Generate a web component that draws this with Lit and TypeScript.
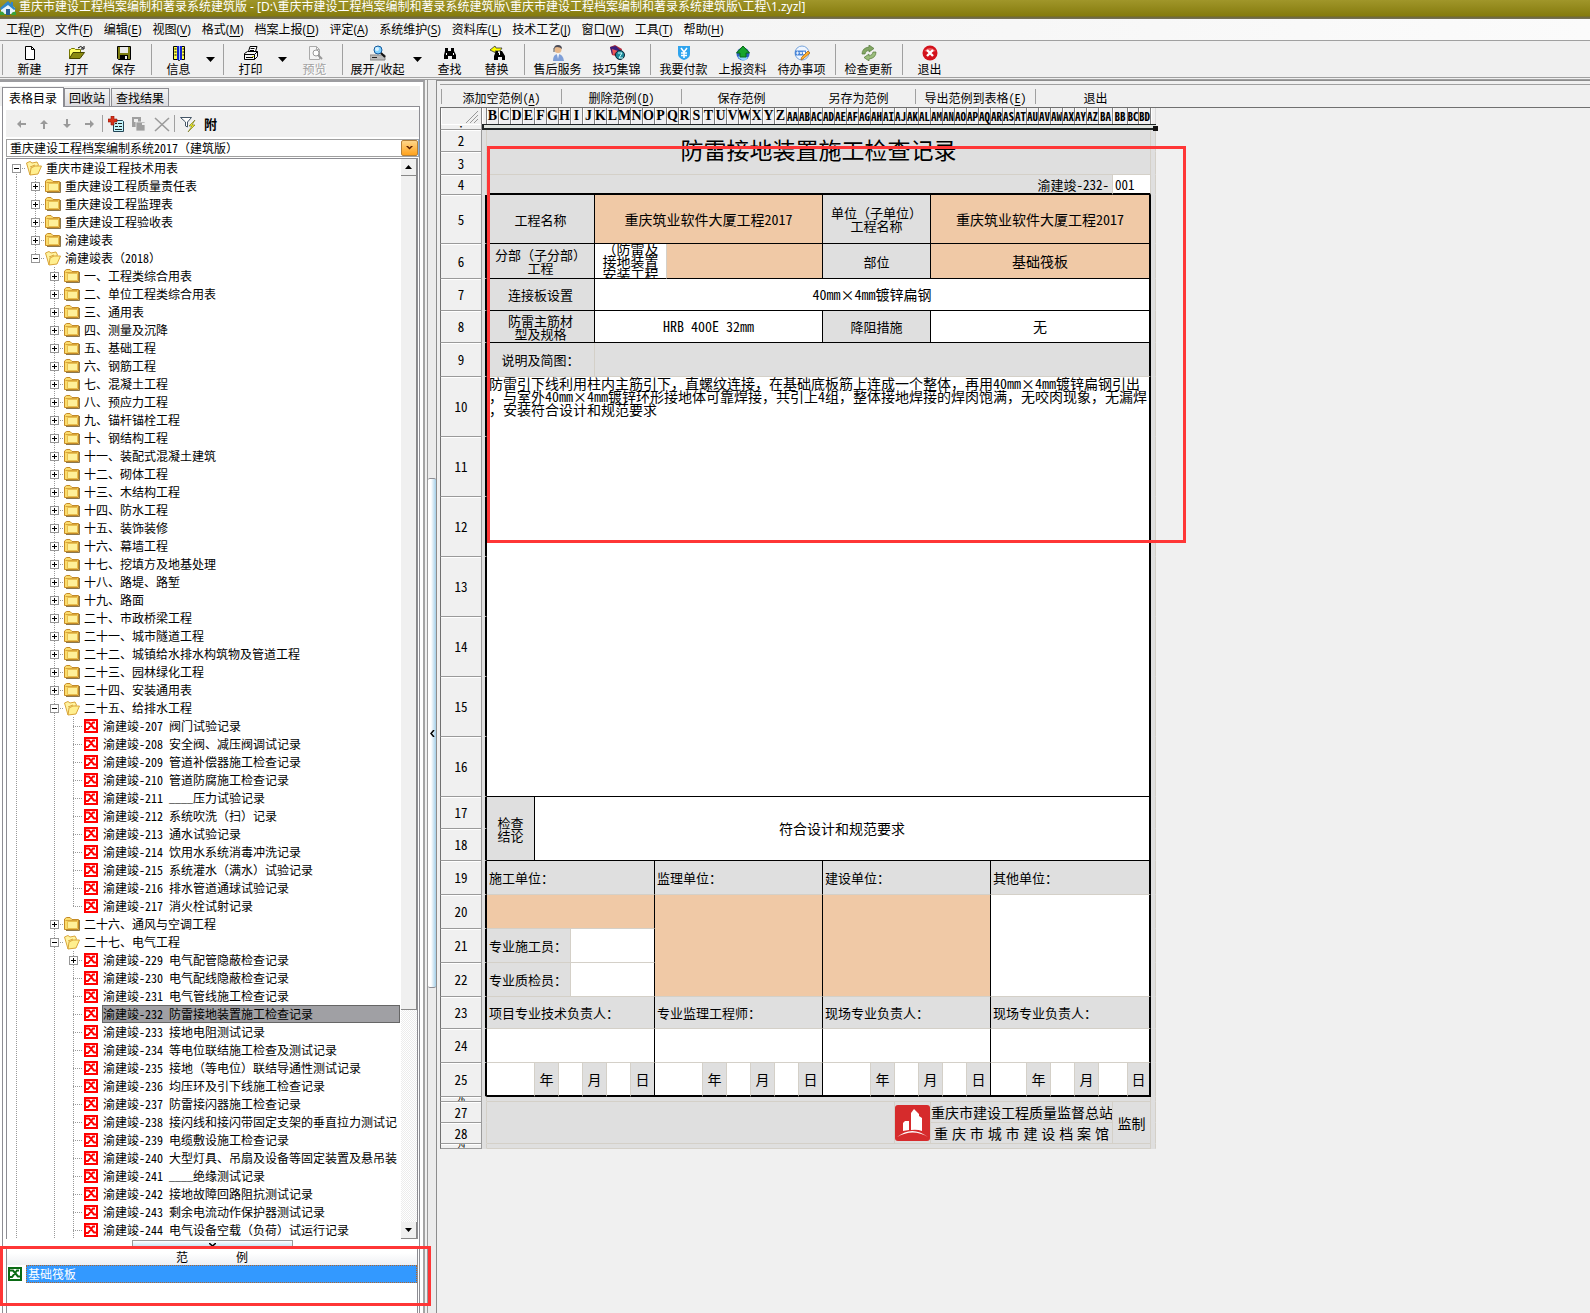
import { LitElement, html, css, svg, nothing } from "lit";
import { customElement, property, state } from "lit/decorators.js";
import { classMap } from "lit/directives/class-map.js";

const frame = (body: unknown, w = 16, h = 16) =>
  html`<svg width=${w} height=${h} viewBox="0 0 ${w} ${h}" aria-hidden="true">${body}</svg>`;

const icons: Record<string, unknown> = {
  app: svg`<path d="M1 8 8 2l7 6v6H1z" fill="#e8f3fb"/><path d="M0 8 8 1l3 3V2h2v4l3 3-2 1-6-5-7 5z" fill="#2f86c9"/><path d="M6 9h4v6H6z" fill="#2b5f95"/><path d="M0 12q3-2 5 3H0zM11 15q1-4 5-3v3z" fill="#3aa13a"/>`,
  new: svg`<path d="M3.500 1.500h6l3 3v10h-9z" fill="#fff" stroke="#000"/><path d="M9.500 1.500v3h3" fill="none" stroke="#000"/>`,
  open: svg`<path d="M.5 13.500v-9h1l1-1h3l1 1h5v3" fill="#ff6" stroke="#770"/><path d="M.5 13.500 4 7.500h11.500L11 13.500z" fill="#8a8a10" stroke="#440"/><path d="M9 3q3-3 5 0M12 4h3V1" fill="none" stroke="#000"/>`,
  save: svg`<path d="M1.500 1.500h13v13h-12l-1-1z" fill="#7d7d12" stroke="#000"/><path d="M4 2h8v6H4z" fill="#e9e9e9"/><path d="M4 10h8v4.500H4z" fill="#000"/><path d="M9 11h2v3H9z" fill="#eee"/>`,
  info: svg`<path d="M2.500 1.500h4l1.500 1 1.500-1h4v13H9.500l-1.500 1-1.500-1h-4z" fill="#ffff4a" stroke="#000"/><path d="M6 1h5v14H6z" fill="#12c"/><path d="M8 1h1v14H8z" fill="#9cf"/><path d="M3.500 4h2M3.500 7h2M3.500 10h2M11.500 4h2M11.500 7h2M11.500 10h2" stroke="#000"/>`,
  print: svg`<path d="M5.500 6.500 7 1.500h7l-1.500 5" fill="#fff" stroke="#000"/><path d="M7.500 3.500h4M7 5.500h4" stroke="#000"/><path d="M1.500 8.500l3-2h10v5l-3 3h-10z" fill="#f5f5f5" stroke="#000"/><path d="M1.500 9.500h10l3-3M11.500 9.500v5M3 12.500h7" fill="none" stroke="#000"/><path d="M9 11h2v1H9z" fill="#dd0"/>`,
  preview: svg`<path d="M2.500 1.500h7l3 3v10h-10z" fill="#f5f5f5" stroke="#aaa"/><path d="M9.500 1.500v3h3" fill="none" stroke="#aaa"/><circle cx="9" cy="8" r="3" fill="#fff" stroke="#999"/><path d="M11 10l4 4" stroke="#999" stroke-width="2"/>`,
  expand: svg`<path d="M0 10h15v5H0z" fill="#bcbcbc" stroke="#888"/><path d="M2 12.500h5" stroke="#222"/><circle cx="8" cy="5" r="4" fill="#7fd0ff" stroke="#155a9c"/><circle cx="7" cy="4" r="2" fill="#d9f2ff"/><path d="M11 8l4 4" stroke="#111" stroke-width="2"/>`,
  find: svg`<path d="M3 3h3v3h3V3h3v3l2 4v4h-4v-3H6v3H2v-4l1-4z" fill="#000"/><path d="M4 8h1v2H4zM11 8h1v2h-1z" fill="#fff"/>`,
  replace: svg`<path d="M1 5l5-4 1 2h6l-2 3H6l1 2z" fill="#ff0" stroke="#333" stroke-width=".8"/><path d="M7 6h2v2h2V6h2l3 5v4h-3v-3H9v3H5v-4z" fill="#000"/><path d="M10 8h1v2h-1z" fill="#fff"/>`,
  service: svg`<circle cx="8" cy="4.500" r="3.500" fill="#e8b98c"/><path d="M4 4q0-4 4-4t4 4q-2-2-5-2-2 0-3 2z" fill="#4b4b55"/><path d="M3 16q0-7 5-7t6 7z" fill="#7f9fd8"/><path d="M7 9h2l-1 5z" fill="#fff"/><path d="M4 3v4" stroke="#555"/>`,
  skill: svg`<path d="M1 2l5-2 7 4-2 8-8-2z" fill="#b02a3a"/><path d="M1 2l6-1 5 5-9 3z" fill="#39207c"/><path d="M3 4l6 2-5 4z" fill="#e55"/><circle cx="11" cy="10" r="4.500" fill="#1e8a9a" stroke="#123"/><path d="M9 8h4l-3 5h4" fill="none" stroke="#cff"/>`,
  pay: svg`<path d="M2 1h12v8q0 4-6 6-6-2-6-6z" fill="#2fa4ee"/><path d="M5 3l3 4 3-4M8 7v6M5 8h6M5 10.500h6" fill="none" stroke="#fff" stroke-width="1.500"/>`,
  upload: svg`<circle cx="8" cy="9" r="6.500" fill="#2d5fc4"/><path d="M3 12q2-3 5-1 3 2 5 1-2 4-5 3.500Q5 15 3 12z" fill="#8fd6ff"/><path d="M8 1l6.500 7H11v4H5V8H1.500z" fill="#18a52c" stroke="#086818"/>`,
  todo: svg`<circle cx="8" cy="8" r="7" fill="#eef5ff" stroke="#79a5dc"/><path d="M1 5.500h11v5H1z" fill="#4a86d8"/><path d="M3 7v2h1V7zM6 7l1 2 1-2M9.500 7v2h1V7z" fill="none" stroke="#fff"/><path d="M9 14l-2 1 .5-2.500L14 6l2 2z" fill="#ffb02e" stroke="#a35f10" stroke-width=".7"/>`,
  update: svg`<path d="M1 9q0-6 7-7V0l5 3.500L8 7V5Q4 6 4 9z" fill="#83a764" stroke="#55783a" stroke-width=".7"/><path d="M15 7q0 6-7 7v2l-5-3.500L8 9v2q4-1 4-4z" fill="#9bbd7c" stroke="#55783a" stroke-width=".7"/>`,
  exit: svg`<circle cx="8" cy="8" r="7.500" fill="#d3121c"/><path d="M2 6q6-6 12 0-6 2-12 0z" fill="#ef5a5f"/><path d="M5 5l6 6M11 5l-6 6" stroke="#fff" stroke-width="2.400"/>`,
  left: svg`<path d="M4 8l4-4v3h5v2H8v3z" fill="#9a9a9a"/>`,
  up: svg`<path d="M8 4l4 4H9v5H7V8H4z" fill="#9a9a9a"/>`,
  down: svg`<path d="M8 12l4-4H9V3H7v5H4z" fill="#9a9a9a"/>`,
  right: svg`<path d="M12 8L8 4v3H3v2h5v3z" fill="#9a9a9a"/>`,
  addForm: svg`<path d="M5.500 4.500h9l1 1v10h-10z" fill="#c4f4fa" stroke="#245"/><path d="M7 7.500h2M10 7.500h4M7 10.500h3M11 10.500h3M7 13.500h7" stroke="#222"/><path d="M3 0h3v3h3v3H6v3H3V6H0V3h3z" fill="#d8321a" stroke="#8d1408" stroke-width=".6"/>`,
  copies: svg`<path d="M1 1h9v10H1z" fill="#9f9f9f"/><path d="M3 3h4v3H3z" fill="#eee"/><path d="M5 6h9v9H5z" fill="#9f9f9f" stroke="#eee" stroke-width=".8"/><path d="M11 7h3v2h-3z" fill="#eee"/>`,
  remove: svg`<path d="M1 2l14 13M15 2L1 15" stroke="#9b9b9b" stroke-width="1.600"/>`,
  filter: svg`<path d="M.5 1.500h11L7.500 6v5l-2-1V6z" fill="#fff" stroke="#456"/><path d="M15 4l-6 6h3l-4 6 7-7h-3z" fill="#ff2" stroke="#772" stroke-width=".7"/>`,
  folder: svg`<path d="M.5 13.500V3L2.500 1.500h3.500L8 3.500h6.500v10z" fill="#fbdc6c" stroke="#c48a26"/><path d="M1.500 4.500h12" stroke="#d9a53a"/><path d="M3.500 5.500h10v7h-10z" fill="#fff09a" stroke="#e8c050"/><path d="M15.500 4v10.500H2" fill="none" stroke="#6e5520" opacity=".8"/>`,
  folderOpen: svg`<path d="M.5 3L4 1.500l2 1.500 5-1 1.500 3L4 15z" fill="#fff3a0" stroke="#d9a53a"/><path d="M4 15L5 8l4-2 6.500 0L12 14z" fill="#ffef8f" stroke="#d9a53a"/><path d="M4 7l5-2" stroke="#d9a53a"/>`,
  sheetRed: svg`<path d="M1 1h14v14H1z" fill="#f00"/><path d="M3 3h10v10H3z" fill="#fff"/><path d="M3 4.500h3l5 6h2M12 4.500h-2l-5 6.500H3" stroke="#f00" stroke-width="2" fill="none"/>`,
  sheetGreen: svg`<path d="M0 1h14v14H0z" fill="#0a6b14"/><path d="M2 3h10v10H2z" fill="#fff"/><path d="M2 4.500h3l5 6h2M11 4.500H9l-5 6.500H2" stroke="#0a6b14" stroke-width="2" fill="none"/>`,
};

const menus: [string, string][] = [
  ["工程", "P"], ["文件", "F"], ["编辑", "E"], ["视图", "V"], ["格式", "M"], ["档案上报", "D"], ["评定", "A"],
  ["系统维护", "S"], ["资料库", "L"], ["技术工艺", "J"], ["窗口", "W"], ["工具", "T"], ["帮助", "H"],
];

type Tool = { label?: string; icon?: string; drop?: boolean; off?: boolean; sep?: boolean };
const tools: Tool[] = [
  { label: "新建", icon: "new" }, { label: "打开", icon: "open" }, { label: "保存", icon: "save" }, { sep: true },
  { label: "信息", icon: "info", drop: true }, { sep: true },
  { label: "打印", icon: "print", drop: true }, { label: "预览", icon: "preview", off: true }, { sep: true },
  { label: "展开/收起", icon: "expand", drop: true }, { label: "查找", icon: "find" }, { label: "替换", icon: "replace" }, { sep: true },
  { label: "售后服务", icon: "service" }, { label: "技巧集锦", icon: "skill" }, { sep: true },
  { label: "我要付款", icon: "pay" }, { label: "上报资料", icon: "upload" }, { label: "待办事项", icon: "todo" }, { sep: true },
  { label: "检查更新", icon: "update" }, { sep: true }, { label: "退出", icon: "exit" },
];

type Node = { t: string; kids?: Node[]; open?: boolean; more?: boolean; leaf?: boolean };
const folder = (t: string): Node => ({ t, kids: [] });
const forms = (first: number, names: string[]): Node[] =>
  names.map((n, i) => ({ t: `渝建竣-${first + i} ${n}`, leaf: true }));

const plumbing = forms(207, [
  "阀门试验记录", "安全阀、减压阀调试记录", "管道补偿器施工检查记录", "管道防腐施工检查记录", "____压力试验记录",
  "系统吹洗（扫）记录", "通水试验记录", "饮用水系统消毒冲洗记录", "系统灌水（满水）试验记录", "排水管道通球试验记录", "消火栓试射记录",
]);
const electric = forms(229, [
  "电气配管隐蔽检查记录", "电气配线隐蔽检查记录", "电气管线施工检查记录", "防雷接地装置施工检查记录", "接地电阻测试记录",
  "等电位联结施工检查及测试记录", "接地（等电位）联结导通性测试记录", "均压环及引下线施工检查记录", "防雷接闪器施工检查记录",
  "接闪线和接闪带固定支架的垂直拉力测试记", "电缆敷设施工检查记录", "大型灯具、吊扇及设备等固定装置及悬吊装", "____绝缘测试记录",
  "接地故障回路阻抗测试记录", "剩余电流动作保护器测试记录", "电气设备空载（负荷）试运行记录",
]);
electric[0].kids = [];
const chapters = [
  "一、工程类综合用表", "二、单位工程类综合用表", "三、通用表", "四、测量及沉降", "五、基础工程", "六、钢筋工程", "七、混凝土工程",
  "八、预应力工程", "九、锚杆锚栓工程", "十、钢结构工程", "十一、装配式混凝土建筑", "十二、砌体工程", "十三、木结构工程", "十四、防水工程",
  "十五、装饰装修", "十六、幕墙工程", "十七、挖填方及地基处理", "十八、路堤、路堑", "十九、路面", "二十、市政桥梁工程", "二十一、城市隧道工程",
  "二十二、城镇给水排水构筑物及管道工程", "二十三、园林绿化工程", "二十四、安装通用表",
].map(folder);
const root: Node = {
  t: "重庆市建设工程技术用表", open: true, more: true,
  kids: [
    folder("重庆建设工程质量责任表"), folder("重庆建设工程监理表"), folder("重庆建设工程验收表"), folder("渝建竣表"),
    {
      t: "渝建竣表（2018）", open: true,
      kids: [
        ...chapters,
        { t: "二十五、给排水工程", open: true, kids: plumbing },
        folder("二十六、通风与空调工程"),
        { t: "二十七、电气工程", open: true, more: true, kids: electric },
      ],
    },
  ],
};
electric[electric.length - 1].more = true;

const shared = css`
  :host { box-sizing: border-box; }
  * { box-sizing: border-box; }
  button { appearance: none; border: 0; padding: 0; margin: 0; background: none; color: inherit; font: inherit; }
  svg { display: block; flex: none; }
`;

@customElement("form-tree")
export class FormTree extends LitElement {
  @state() private picked = "渝建竣-232 防雷接地装置施工检查记录";
  @state() private flips = 0;

  static styles = [shared, css`
    :host { display: block; min-width: 0; overflow: hidden; }
    .row { display: flex; height: 18px; align-items: stretch; }
    .guide { flex: none; width: 19px; display: grid; place-items: center; background-repeat: no-repeat; }
    .guide.full, .guide.top, .guide.bottom { background-image: repeating-linear-gradient(#999 0 1px, transparent 1px 2px); background-size: 1px 100%; background-position: 9px 0; }
    .guide.top { background-size: 1px 10px; }
    .guide.bottom { background-size: 1px 9px; background-position: 9px 9px; }
    .arm { width: 100%; height: 1px; padding-left: 9px; background: repeating-linear-gradient(90deg, #999 0 1px, transparent 1px 2px) content-box; }
    .stack { grid-area: 1 / 1; }
    .toggle { grid-area: 1 / 1; width: 9px; height: 9px; border: 1px solid #969696; background: #fff; display: grid; place-items: center; }
    .toggle svg { grid-area: 1 / 1; }
    .icon { flex: none; width: 19px; display: flex; align-items: center; }
    .label { flex: 1; min-width: 0; text-align: left; border: 1px solid transparent; line-height: 16px; white-space: pre; overflow: hidden; }
    .label.on { background: #a0a0a4; border-color: #666; }
    .blank { font: 10px/12px "Liberation Mono", monospace; }
  `];

  private toggle(n: Node) {
    n.open = !n.open;
    this.flips++;
  }

  private text(t: string) {
    const [head, tail] = t.split("____");
    return tail === undefined ? t : html`${head}<span class="blank">____</span>${tail}`;
  }

  private rows(n: Node, rails: boolean[], last: boolean): unknown {
    const hasKids = !!n.kids;
    const kind = rails.length === 0 ? "bottom" : last ? "top" : "full";
    const icon = n.leaf ? icons.sheetRed : n.open ? icons.folderOpen : icons.folder;
    return html`
      <div class="row" role="treeitem">
        ${rails.map((r) => html`<span class="guide ${r ? "full" : ""}"></span>`)}
        <span class="guide ${kind}">
          <span class="arm stack"></span>
          ${hasKids ? html`<button class="toggle" aria-label="展开或收起 ${n.t}" @click=${() => this.toggle(n)}>
            ${frame(svg`<path d=${n.open ? "M1 3.500h5" : "M1 3.500h5M3.500 1v5"} stroke="#000"/>`, 7, 7)}
          </button>` : nothing}
        </span>
        <span class="icon">${frame(icon)}</span>
        <button class=${classMap({ label: true, on: n.t === this.picked })} @click=${() => (this.picked = n.t)}>${this.text(n.t)}</button>
      </div>
      ${n.open ? n.kids!.map((k, i, all) => this.rows(k, [...rails, !last], i === all.length - 1 && !k.more)) : nothing}`;
  }

  render() {
    return html`<div role="tree" data-flips=${this.flips}>${this.rows(root, [], false)}</div>`;
  }
}

const rowHeights = [6, 22, 23, 20, 49, 35, 32, 32, 34, 60, 60, 60, 60, 60, 60, 60, 32, 32, 34, 34, 34, 34, 32, 34, 34, 5, 21, 21, 5];

type Cell = { s: number; c?: string; t?: unknown; r?: number };
const c = (s: number, cls = "", t: unknown = nothing, r = 1): Cell => ({ s, c: cls, t, r });
const lines = (...t: string[]) => t.map((x) => html`<div>${x}</div>`);
const date = (lead: number, gap: number, cls: string): Cell[] => [
  c(lead, "white"), c(2, "kai", "年"), c(2, "white"), c(2, "kai", "月"), c(gap, "white"), c(2, `kai ${cls}`, "日"),
];

const logo = frame(svg`<rect width="35" height="36" rx="3" fill="#d62b2c"/><path d="M16 25V8l3-4 5 5v2l3 2v13q-5-2-11-1z" fill="#fff"/><path d="M8 26V18l2-2h4v9z" fill="#fff"/><path d="M2 32q15-12 31 0-15-9-31 0z" fill="#fff"/>`, 35, 36);

const sheet: Cell[][] = [
  [],
  [c(55, "title", "防雷接地装置施工检查记录", 2)],
  [],
  [c(52, "right thick", "渝建竣-232-"), c(3, "white code thick", "001")],
  [c(9, "k", "工程名称"), c(19, "fill k kai", "重庆筑业软件大厦工程2017"), c(9, "k", lines("单位（子单位）", "工程名称")), c(18, "fill k kai edge", "重庆筑业软件大厦工程2017")],
  [c(9, "k", lines("分部（子分部）", "工程")), c(6, "white kb kai", html`<div class="clip">${lines("（防雷及", "接地装置", "安装工程")}</div>`), c(13, "fill k"), c(9, "k", "部位"), c(18, "fill k kai edge", "基础筏板")],
  [c(9, "k", "连接板设置"), c(46, "white k kai edge", "40mm×4mm镀锌扁钢")],
  [c(9, "k", lines("防雷主筋材", "型及规格")), c(19, "white k kai", "HRB 400E 32mm"), c(9, "k", "降阻措施"), c(18, "white k kai edge", "无")],
  [c(9, "", "说明及简图："), c(46, "edge")],
  [c(55, "white k kai note edge", lines(
    "防雷引下线利用柱内主筋引下，直螺纹连接，在基础底板筋上连成一个整体，再用40mm×4mm镀锌扁钢引出",
    "，与室外40mm×4mm镀锌环形接地体可靠焊接，共引上4组，整体接地焊接的焊肉饱满，无咬肉现象，无漏焊",
    "，安装符合设计和规范要求"), 7)],
  [], [], [], [], [], [],
  [c(4, "k", lines("检查", "结论"), 2), c(51, "white k kai edge", "符合设计和规范要求", 2)],
  [],
  [c(14, "left kr", "施工单位："), c(14, "left kr", "监理单位："), c(14, "left kr", "建设单位："), c(13, "left edge", "其他单位：")],
  [c(14, "fill kr"), c(14, "fill kr", nothing, 3), c(14, "fill kr", nothing, 3), c(13, "white edge", nothing, 3)],
  [c(7, "left", "专业施工员："), c(7, "white kr")],
  [c(7, "left", "专业质检员："), c(7, "white kr")],
  [c(14, "left kr", "项目专业技术负责人："), c(14, "left kr", "专业监理工程师："), c(14, "left kr", "现场专业负责人："), c(13, "left edge", "现场专业负责人：")],
  [c(14, "white kr"), c(14, "white kr"), c(14, "white kr"), c(13, "white edge")],
  [...date(4, 2, "kr"), ...date(4, 2, "kr"), ...date(4, 2, "kr"), ...date(3, 2, "edge")],
  [c(55)],
  [c(34, "", nothing, 2), c(3, "logo", logo, 2), c(15, "org", "重庆市建设工程质量监督总站"), c(3, "org", "监制", 2)],
  [c(15, "org spread", "重 庆 市 城 市 建 设 档 案 馆")],
  [c(55)],
];

const letters: string[] = [];
for (let i = 1; i < 56; i++) {
  const a = String.fromCharCode(65 + (i % 26));
  letters.push(i < 26 ? a : String.fromCharCode(64 + Math.floor(i / 26)) + a);
}

@customElement("record-sheet")
export class RecordSheet extends LitElement {
  static styles = [shared, css`
    :host { display: block; position: relative; align-self: flex-start; }
    table { border-collapse: separate; border-spacing: 0; table-layout: fixed; width: 716px; font-size: 13px; line-height: 13px; color: #000; }
    .c-head { width: 42px; } .c-a { width: 5px; } .c-n { width: 12px; } .c-ba { width: 14px; } .c-bb { width: 15px; } .c-bc { width: 11px; } .c-z { width: 5px; }
    th, td { padding: 0; text-align: center; vertical-align: middle; overflow: hidden; white-space: nowrap; }
    thead th { height: 16px; border-right: 1px solid #808080; background: linear-gradient(90deg, #fff 1px, #f0f0f0 1px); font: bold 14px/16px "Liberation Serif", serif; }
    thead th.two { font: bold 11px/16px "Noto Sans Mono CJK SC", "Liberation Mono", monospace; }
    thead th div { display: flex; justify-content: center; width: 100%; overflow: hidden; }
    thead .corner { border-left: 1px solid #707070; }
    thead .corner svg { margin-left: auto; }
    thead th.last { border-right-color: #dcdcdc; }
    tbody th { font-weight: 400; background: linear-gradient(#fff 1px, #f0f0f0 1px); border-bottom: 1px solid #9a9a9a; border-right: 1px solid #9a9a9a; border-left: 1px solid #707070; }
    .tiny { display: flex; align-items: center; justify-content: center; height: 4px; overflow: hidden; font-size: 8px; line-height: 4px; }
    td { background: #dfdfdf; border-right: 1px solid #d4d0c8; border-bottom: 1px solid #d4d0c8; }
    td.white { background: #fff; }
    td.fill { background: #f0c9a6; }
    td.k { border-right-color: #000; border-bottom-color: #000; }
    td.kb { border-bottom-color: #000; }
    td.kr { border-right-color: #000; }
    td.edge { border-right: 2px solid #000; }
    td.thick { border-bottom: 2px solid #000; }
    tr.final td:not(.a):not(.z) { border-bottom: 2px solid #000; }
    td.a { border-bottom-color: #dfdfdf; }
    td.a.framed { border-right: 2px solid #000; }
    td.z { border-bottom-color: #dfdfdf; }
    td.left { text-align: left; padding-left: 2px; }
    td.right { text-align: right; padding-right: 3px; }
    td.code { text-align: left; padding-left: 2px; }
    td.kai { font-size: 14px; font-weight: 300; }
    td.note { vertical-align: top; text-align: left; padding-left: 2px; }
    td.title { font-size: 23px; line-height: 24px; font-weight: 500; padding-bottom: 6px; }
    td.org { font-family: "Noto Sans CJK SC", sans-serif; font-size: 14px; line-height: 16px; }
    td.spread { text-align-last: justify; padding: 0 3px; }
    .clip { height: 34px; overflow: hidden; display: flex; flex-direction: column; justify-content: center; }
    .clip div { flex: none; }
    td.cursor { height: 6px; border: solid #1e2424; border-width: 1px 0 2px 2px; background: #dfe4df; }
    .knob { position: absolute; left: 713px; top: 18px; width: 5px; height: 5px; background: #111; }
    .mark { position: absolute; left: 47px; top: 38px; width: 699px; height: 397px; border: 3px solid #ff3636; pointer-events: none; }
  `];

  private row(i: number) {
    const n = i + 1;
    const h = rowHeights[i];
    const small = h < 10;
    const framed = n >= 5 && n <= 25;
    return html`<tr class=${n === 25 ? "final" : ""} style="height:${h}px">
      <th scope="row">${small ? html`<div class="tiny">${n === 1 ? "·" : n}</div>` : n}</th>
      ${i === 0 ? html`<td class="cursor" colspan="57"></td>` : html`
        <td class=${classMap({ a: true, framed })}></td>
        ${sheet[i].map((x) => html`<td class=${x.c ?? ""} colspan=${x.s} rowspan=${x.r ?? 1}>${x.t}</td>`)}
        <td class="z"></td>`}
    </tr>`;
  }

  render() {
    return html`
      <table>
        <colgroup>
          <col class="c-head"><col class="c-a">${letters.slice(0, 51).map(() => html`<col class="c-n">`)}
          <col class="c-ba"><col class="c-bb"><col class="c-bc"><col class="c-n"><col class="c-z">
        </colgroup>
        <thead><tr>
          <th class="corner">${frame(svg`<path d="M1 15L13 3M5 15l8-8M9 15l4-4" stroke="#999"/>`)}</th><th></th>
          ${letters.map((l) => html`<th scope="col" class=${l.length > 1 ? "two" : ""}><div>${l}</div></th>`)}
          <th class="last"></th>
        </tr></thead>
        <tbody>${rowHeights.map((_, i) => this.row(i))}</tbody>
      </table>
      <span class="knob"></span>
      <span class="mark"></span>`;
  }
}

@customElement("app-root")
export class AppRoot extends LitElement {
  @property({ type: String }) heading =
    "重庆市建设工程档案编制和著录系统建筑版 - [D:\\重庆市建设工程档案编制和著录系统建筑版\\重庆市建设工程档案编制和著录系统建筑版\\工程\\1.zyzl]";
  @state() private tab = 0;

  static styles = [shared, css`
    :host { display: flex; flex-direction: column; min-height: 100vh; overflow: hidden; background: #f0f0f0; color: #000;
      font: 12px/16px "Noto Sans Mono CJK SC", "Noto Sans CJK SC", sans-serif; }
    .titlebar { display: flex; align-items: flex-start; gap: 3px; height: 19px; overflow: hidden; color: #fff; background: linear-gradient(#a0962a, #857b0d 16px, #6f683a 17px, #77735c);
      font-family: "Noto Sans", "Noto Sans CJK SC", sans-serif; white-space: nowrap; }
    .titlebar h1 { margin: 0; font: inherit; line-height: 13px; }
    .menubar { display: flex; height: 22px; padding-left: 1px; border-bottom: 1px solid #a0a0a0; background: linear-gradient(90deg, #f0f0f0, #fbfbfb);
      font-family: "Open Sans", "Noto Sans CJK SC", sans-serif; }
    .menubar button { padding: 0 6px 0 5px; line-height: 22px; white-space: nowrap; }
    .toolbar { display: flex; height: 37px; padding: 3px 0 2px 2px; border-bottom: 1px solid #a0a0a0; background: #f0f0f0; }
    .toolbar::before { content: ""; width: 1px; margin-right: 3px; background: #a0a0a0; }
    .tool { width: 47px; display: flex; flex-direction: column; align-items: center; line-height: 16px; white-space: nowrap; padding-top: 1px; }
    .tool.wide { width: 59px; }
    .tool.long { width: 63px; }
    .tool[disabled] { color: #a0a0a0; text-shadow: 1px 1px #fff; }
    .drop { width: 17px; display: grid; place-items: center; }
    .sep { width: 1px; margin: 0 3px 0 4px; background: #a0a0a0; }
    .main { flex: 1; display: flex; align-items: stretch; border-top: 1px solid #a0a0a0; margin-top: 1px; background: #f0f0f0; }
    .side { flex: 0 0 425px; display: flex; flex-direction: column; border-top: 2px solid #9c9ca0; border-right: 2px solid #a4a4a4; background: #fff; padding: 4px 3px 0 0; }
    .tabs { display: flex; align-items: flex-end; height: 20px; padding-left: 2px; background: #f0f0f0; }
    .tabs button { height: 18px; margin-right: 1px; padding: 0 4px; border: 1px solid #8d8d93; border-bottom: 0; background: linear-gradient(#f3f3f3, #dcdce0); line-height: 18px; }
    .tabs button.on { height: 20px; margin: 0 0 -1px; padding: 0 6px; background: #fff; line-height: 17px; z-index: 1; }
    .page { flex: 1; display: flex; flex-direction: column; margin-left: 2px; border: 1px solid #8d8d93; border-bottom: 0; padding: 3px 0 0 3px; }
    .mini { display: flex; align-items: center; height: 27px; padding-left: 3px; background: #f0f0f0; }
    .mini button { width: 23px; display: grid; place-items: center; }
    .mini i { width: 1px; height: 17px; margin: 0 1px; background: #a0a0a0; }
    .mini b { font-size: 13px; }
    .combo { display: flex; height: 18px; margin-top: 2px; border: 1px solid #a0a0a0; border-right-color: #8ab0dc; background: #fff; }
    .combo select { appearance: none; flex: 1; min-width: 0; border: 0; padding: 0 0 0 3px; background: #fff; color: #000; font: inherit; line-height: 16px; }
    .combo span { width: 17px; border: 1px solid #b5813a; border-radius: 2px; background: linear-gradient(#ffd68a, #ffa21c); display: grid; place-items: center; }
    .treebox { display: flex; margin: 1px 1px 0 0; border: solid #8d8d93; border-width: 1px 1px 0 1px; }
    form-tree { flex: 1; }
    .scroll { flex: 0 0 16px; display: flex; flex-direction: column; background: repeating-conic-gradient(#fff 0 25%, #ececec 0 50%) 0 0 / 2px 2px; margin-left: 1px; }
    .scroll button { height: 17px; display: grid; place-items: center; background: #f0f0f0; border: solid #888; border-width: 0 1px 1px 0; }
    .scroll div { flex: 833 1 0; background: #f0f0f0; border: solid #888; border-width: 0 1px 1px 0; }
    .scroll span { flex: 212 1 0; }
    .grip { align-self: center; width: 161px; height: 8px; margin-top: 1px; display: grid; place-items: center; background: linear-gradient(#fff, #b7dcf0); border: 1px solid #999; border-bottom: 0; }
    .samples { position: relative; flex: 1; min-height: 64px; border: solid #8d8d93; border-width: 0 1px; margin-right: 1px; }
    .samples h2 { margin: 0; height: 17px; display: flex; justify-content: center; gap: 48px; font: inherit; line-height: 18px; background: linear-gradient(#fff 5px, #eef0f3); }
    .sample { display: flex; align-items: center; padding-left: 1px; height: 18px; gap: 2px; width: 100%; }
    .sample span { flex: 1; height: 18px; line-height: 15px; text-align: left; padding-left: 1px; background: #3399ff; color: #fff; border: 1px dotted #b0652c; }
    .mark { position: absolute; left: -7px; top: -2px; width: 431px; height: 60px; border: 3px solid #ff3636; pointer-events: none; }
    .split { flex: 0 0 10px; display: flex; align-items: flex-start; border-right: 1px solid #8d8d8d; margin-left: 2px; background: #ececec; border-left: 1px solid #9a9a9a; }
    .split button { margin-top: 398px; height: 510px; width: 8px; border: solid #8d8d93; border-width: 1px 0; border-radius: 2px; background: linear-gradient(90deg, #fff 3px, #a5cfe8); display: grid; place-items: center; }
    .work { flex: 1; min-width: 0; display: flex; flex-direction: column; border-top: 1px solid #8d8d8d; padding: 3px 0 0 3px; background: #f0f0f0; }
    .actions { display: flex; height: 24px; padding: 4px 0 3px 1px; border: solid #a0a0a0; border-width: 1px 0; border-bottom-color: #707070; }
    .actions button { width: 120px; line-height: 17px; border-left: 1px solid #a0a0a0; white-space: nowrap; }
    .actions .plain { border-left-color: transparent; width: 114px; }
    .canvas { flex: 1; display: flex; }
    u { text-underline-offset: 2px; }
  `];

  private label(text: string, key: string) {
    return html`${text}(<u>${key}</u>)`;
  }

  private tool(t: Tool) {
    if (t.sep) return html`<span class="sep"></span>`;
    const n = t.label!.length;
    return html`<button class=${classMap({ tool: true, wide: n === 4, long: n > 4 })} ?disabled=${!!t.off}>${frame(icons[t.icon!])}${t.label}</button>
      ${t.drop ? html`<button class="drop" aria-label="${t.label}选项">${frame(svg`<path d="M0 0h9L4.500 5z" fill="#000"/>`, 9, 5)}</button>` : nothing}`;
  }

  render() {
    return html`
      <header class="titlebar">${frame(icons.app)}<h1>${this.heading}</h1></header>
      <nav class="menubar">${menus.map(([t, k]) => html`<button>${this.label(t, k)}</button>`)}</nav>
      <div class="toolbar">${tools.map((t) => this.tool(t))}</div>
      <div class="main">
        <aside class="side">
          <div class="tabs" role="tablist">
            ${["表格目录", "回收站", "查找结果"].map((t, i) => html`<button role="tab" class=${i === this.tab ? "on" : ""} @click=${() => (this.tab = i)}>${t}</button>`)}
          </div>
          <div class="page">
            <div class="mini">
              ${["left", "up", "down", "right"].map((n) => html`<button aria-label=${n}>${frame(icons[n])}</button>`)}
              <i></i>
              ${["addForm", "copies", "remove"].map((n) => html`<button aria-label=${n}>${frame(icons[n])}</button>`)}
              <i></i>
              <button aria-label="filter">${frame(icons.filter)}</button><button><b>附</b></button>
            </div>
            <div class="combo">
              <select aria-label="表格系统"><option>重庆建设工程档案编制系统2017（建筑版）</option></select>
              <span>${frame(svg`<path d="M0 0h2l1.500 1.500L5 0h2L3.500 3.500z" fill="#5a1c00"/>`, 7, 4)}</span>
            </div>
            <div class="treebox">
              <form-tree></form-tree>
              <div class="scroll">
                <button aria-label="向上">${frame(svg`<path d="M0 4h7L3.500 0z" fill="#000"/>`, 7, 4)}</button>
                <div></div><span></span>
                <button aria-label="向下">${frame(svg`<path d="M0 0h7L3.500 4z" fill="#000"/>`, 7, 4)}</button>
              </div>
            </div>
            <button class="grip" aria-label="收起范例">${frame(svg`<path d="M0 0l3.500 3L7 0" fill="none" stroke="#000" stroke-width="1.500"/>`, 7, 4)}</button>
            <section class="samples">
              <h2><span>范</span><span>例</span></h2>
              <button class="sample">${frame(icons.sheetGreen)}<span>基础筏板</span></button>
              <span class="mark"></span>
            </section>
          </div>
        </aside>
        <div class="split"><button aria-label="收起目录">${frame(svg`<path d="M4 0L1 3.500 4 7" fill="none" stroke="#000" stroke-width="1.500"/>`, 5, 7)}</button></div>
        <section class="work">
          <div class="actions">
            <button>${this.label("添加空范例", "A")}</button><button>${this.label("删除范例", "D")}</button><button>保存范例</button>
            <button class="plain">另存为范例</button><button>${this.label("导出范例到表格", "E")}</button><button>退出</button>
          </div>
          <div class="canvas"><record-sheet></record-sheet></div>
        </section>
      </div>`;
  }
}
